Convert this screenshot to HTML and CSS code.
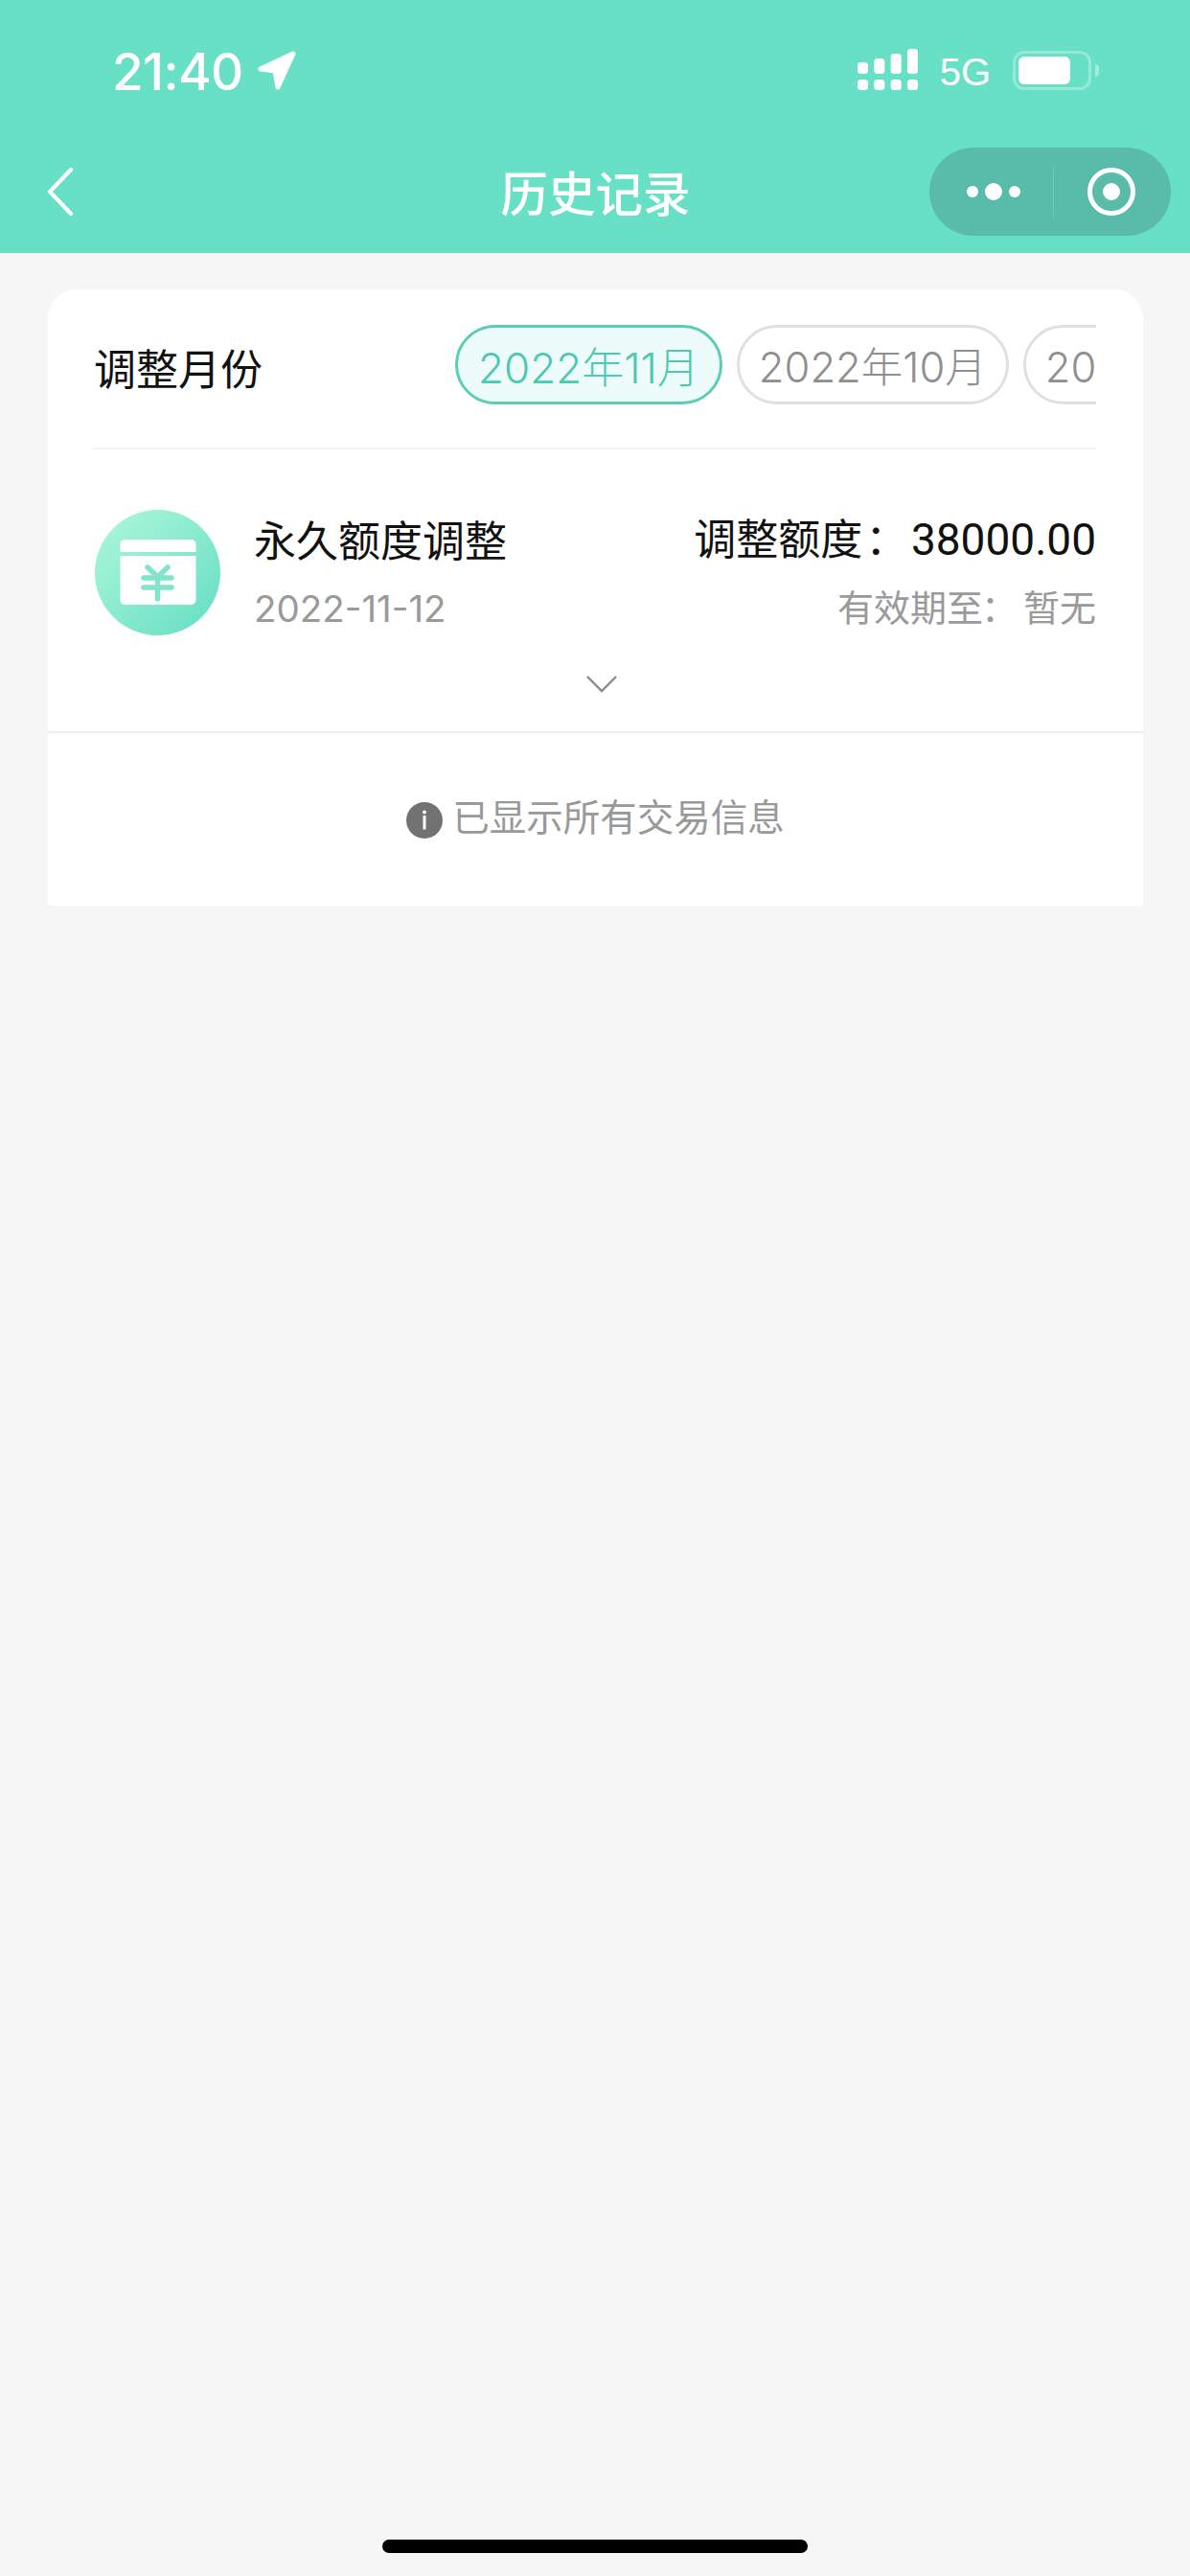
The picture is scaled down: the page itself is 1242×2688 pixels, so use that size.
FILE: index.html
```html
<!DOCTYPE html>
<html lang="zh-CN">
<head>
<meta charset="utf-8">
<title>历史记录</title>
<link rel="stylesheet" href="styles.css">
</head>
<body>
<div class="page">
  <header class="header">
    <div class="status">
      <div class="status-left">
        <span class="time">21:40</span>
        <svg class="loc" width="40" height="41" viewBox="0 0 40 41"><path d="M3 19 L37 3 L21 38 L18 21 Z" fill="#fff" stroke="#fff" stroke-width="5" stroke-linejoin="round"/></svg>
      </div>
      <div class="status-right">
        <svg class="signal" width="63" height="44" viewBox="0 0 63 44">
          <g fill="#fff">
            <rect x="0" y="14" width="11" height="12" rx="3.5"/><rect x="17.3" y="10" width="11" height="16" rx="3.5"/><rect x="34.7" y="5" width="11" height="21" rx="3.5"/><rect x="52" y="0" width="11" height="26" rx="3.5"/>
            <rect x="0" y="32" width="11" height="11" rx="3.5"/><rect x="17.3" y="32" width="11" height="11" rx="3.5"/><rect x="34.7" y="32" width="11" height="11" rx="3.5"/><rect x="52" y="32" width="11" height="11" rx="3.5"/>
          </g>
        </svg>
        <span class="net">5G</span>
        <div class="battery"><div class="battery-body"><div class="battery-fill"></div></div><div class="battery-nub"></div></div>
      </div>
    </div>
    <nav class="nav">
      <div class="nav-side">
        <svg class="back" width="28" height="50" viewBox="0 0 28 50"><path d="M25 2 L3 25 L25 48" fill="none" stroke="#fff" stroke-width="4" stroke-linecap="round" stroke-linejoin="round"/></svg>
      </div>
      <h1 class="title">历史记录</h1>
      <div class="nav-side nav-side-end">
        <div class="capsule">
          <div class="cap-cell cap-more">
            <svg width="58" height="20" viewBox="0 0 58 20"><circle cx="6" cy="10" r="6" fill="#fff"/><circle cx="28" cy="10" r="9" fill="#fff"/><circle cx="50" cy="10" r="6" fill="#fff"/></svg>
          </div>
          <div class="cap-line"></div>
          <div class="cap-cell cap-rec">
            <svg width="54" height="54" viewBox="0 0 54 54"><circle cx="27" cy="27" r="22.5" fill="none" stroke="#fff" stroke-width="5"/><circle cx="27" cy="27" r="9" fill="#fff"/></svg>
          </div>
        </div>
      </div>
    </nav>
  </header>

  <main class="main">
    <section class="card">
      <div class="months">
        <span class="months-label">调整月份</span>
        <div class="chips">
          <span class="chip chip-on">2022年11月</span>
          <span class="chip">2022年10月</span>
          <span class="chip">2022年9月</span>
        </div>
      </div>
      <div class="record">
        <svg class="rec-icon" width="131" height="131" viewBox="0 0 131 131">
          <defs><linearGradient id="g" x1="0.1" y1="0.05" x2="0.95" y2="0.9"><stop offset="0" stop-color="#aaf6d8"/><stop offset="1" stop-color="#68dfc5"/></linearGradient></defs>
          <circle cx="65.5" cy="65.5" r="65.5" fill="url(#g)"/>
          <path d="M26.5 44V36a5 5 0 0 1 5-5h69a5 5 0 0 1 5 5v8z" fill="#fff"/>
          <path d="M26.5 48h79v46a5 5 0 0 1-5 5h-69a5 5 0 0 1-5-5z" fill="#fff"/>
          <path d="M55 60 L65.5 70 L76 60 M65.5 70 V93 M51 71 H80 M51 81 H80" fill="none" stroke="#80e5cc" stroke-width="5.5" stroke-linecap="round"/>
        </svg>
        <div class="rec-left">
          <div class="rec-title">永久额度调整</div>
          <div class="rec-date">2022-11-12</div>
        </div>
        <div class="rec-right">
          <div class="rec-amount">调整额度<span class="colon-l">：</span><span class="num">38000.00</span></div>
          <div class="rec-expire">有效期至<span class="colon-s">：</span>暂无</div>
        </div>
      </div>
      <div class="expand">
        <svg width="34" height="20" viewBox="0 0 34 20"><path d="M2 2 L17 17 L32 2" fill="none" stroke="#8a8a8a" stroke-width="2.4"/></svg>
      </div>
      <div class="end-note">
        <svg class="info" width="38" height="38" viewBox="0 0 38 38"><circle cx="19" cy="19" r="19" fill="#727272"/><circle cx="19" cy="10.5" r="1.9" fill="#fff"/><rect x="17.5" y="14" width="3" height="14.5" fill="#fff"/></svg>
        <span class="end-text">已显示所有交易信息</span>
      </div>
    </section>
  </main>
  <div class="home-wrap"><div class="home-bar"></div></div>
</div>
</body>
</html>
```
FILE: styles.css
```css
* { box-sizing: border-box; }
html, body { margin: 0; padding: 0; }
body {
  background: #f6f6f6;
  font-family: Roboto, "Noto Sans CJK SC", sans-serif;
}
.page {
  width: 1242px;
  height: 2688px;
  display: flex;
  flex-direction: column;
  overflow: hidden;
}
.header { background: #67e0c5; height: 264px; color: #fff; display: flex; flex-direction: column; }
.status {
  height: 136px;
  padding: 51px 95px 0 117px;
  display: flex;
  justify-content: space-between;
  align-items: flex-start;
}
.status-left { display: flex; align-items: center; gap: 15px; height: 44px; }
.time { font-family: Inter, Roboto, sans-serif; font-size: 53px; font-weight: 500; line-height: 44px; letter-spacing: -.6px; padding-top: 3px; }
.loc { display: block; }
.status-right { display: flex; align-items: flex-start; }
.signal { display: block; margin-right: 23px; }
.net { font-family: "Liberation Sans", sans-serif; font-size: 40px; line-height: 44px; margin-right: 23px; margin-top: 2px; }
.battery { display: flex; align-items: center; gap: 4px; height: 41px; margin-top: 2px; }
.battery-body { width: 82px; height: 41px; border: 3.5px solid rgba(255,255,255,.3); border-radius: 12px; padding: 3px; }
.battery-fill { width: 54px; height: 100%; background: #fff; border-radius: 6px; }
.battery-nub { width: 4px; height: 13px; background: rgba(255,255,255,.4); border-radius: 0 4px 4px 0; }
.nav {
  height: 128px;
  display: grid;
  grid-template-columns: 1fr auto 1fr;
  align-items: center;
  padding: 0 20px 0 49px;
}
.nav-side { display: flex; align-items: center; }
.nav-side-end { justify-content: flex-end; }
.back { display: block; }
.title { margin: 0 28px 0 0; font-family: "Noto Sans CJK SC", sans-serif; font-size: 49.5px; line-height: 60px; font-weight: 500; }
.capsule {
  width: 252px; height: 92px; border-radius: 46px; background: #58bca8;
  display: flex; align-items: center;
}
.cap-cell { display: flex; align-items: center; justify-content: center; flex: 1; }
.cap-more { padding-left: 8px; }
.cap-rec { padding-right: 2px; }
.cap-line { width: 1px; height: 55px; background: rgba(255,255,255,.18); }
.main { flex: 1; padding: 38px 49px 0 50px; }
.card { background: #fff; border-radius: 30px 30px 0 0; height: 643px; display: flex; flex-direction: column; }
.months {
  margin: 0 49px 0 47px;
  height: 167px;
  flex: none;
  padding-bottom: 8px;
  border-bottom: 2px solid #f3f3f3;
  display: flex;
  align-items: center;
  justify-content: space-between;
}
.months-label { font-family: "Noto Sans CJK SC", sans-serif; font-size: 44px; color: #111; white-space: nowrap; padding: 4px 0 0 1px; }
.chips { width: 669px; display: flex; gap: 15px; overflow: hidden; }
.chip {
  flex: none;
  height: 83px;
  border: 3px solid #e0e0e0;
  border-radius: 42px;
  padding: 0 20px;
  display: flex;
  align-items: center;
  font-family: Inter, "Noto Sans CJK SC", sans-serif;
  font-size: 43.5px;
  font-weight: 300;
  color: #8f8f8f;
  white-space: nowrap;
}
.chip-on { border-color: #5bcdb7; background: #edfcfb; color: #4fc8b1; font-size: 44px; padding: 0 21px; }
.record { display: flex; align-items: flex-start; flex: none; padding: 63px 49px 0 49px; }
.rec-icon { flex: none; display: block; margin-right: 35px; }
.rec-left { flex: 1; }
.rec-title { font-family: "Noto Sans CJK SC", sans-serif; font-size: 44px; line-height: 60px; color: #111; }
.rec-date { font-family: Inter, sans-serif; font-size: 38.5px; line-height: 52px; color: #9a9a9a; margin-top: 17px; }
.rec-right { text-align: right; }
.rec-amount { font-family: "Noto Sans CJK SC", sans-serif; font-size: 44px; line-height: 60px; color: #111; margin-top: -2px; }
.rec-expire { font-family: "Noto Sans CJK SC", sans-serif; font-size: 38px; line-height: 52px; color: #9a9a9a; margin-top: 13px; }
.colon-l { margin: 0 1.6px 0 3px; }
.colon-s { margin: 0 6px 0 -2px; }
.num { font-family: Roboto, sans-serif; font-size: 46px; margin-left: 2px; }
.expand { display: flex; justify-content: center; height: 102px; padding: 41px 0 0 12px; border-bottom: 2px solid #eeeeee; flex: none; }
.expand svg { display: block; }
.end-note { display: flex; align-items: center; justify-content: center; gap: 10px; height: 181px; padding-bottom: 4px; }
.info { margin-top: 6px; }
.end-text { font-size: 38.5px; color: #999; font-family: "Noto Sans CJK SC", sans-serif; margin-bottom: 6px; }
.home-wrap { height: 38px; flex: none; display: flex; justify-content: center; }
.home-bar { width: 444px; height: 14px; background: #000; border-radius: 7px; }
```
